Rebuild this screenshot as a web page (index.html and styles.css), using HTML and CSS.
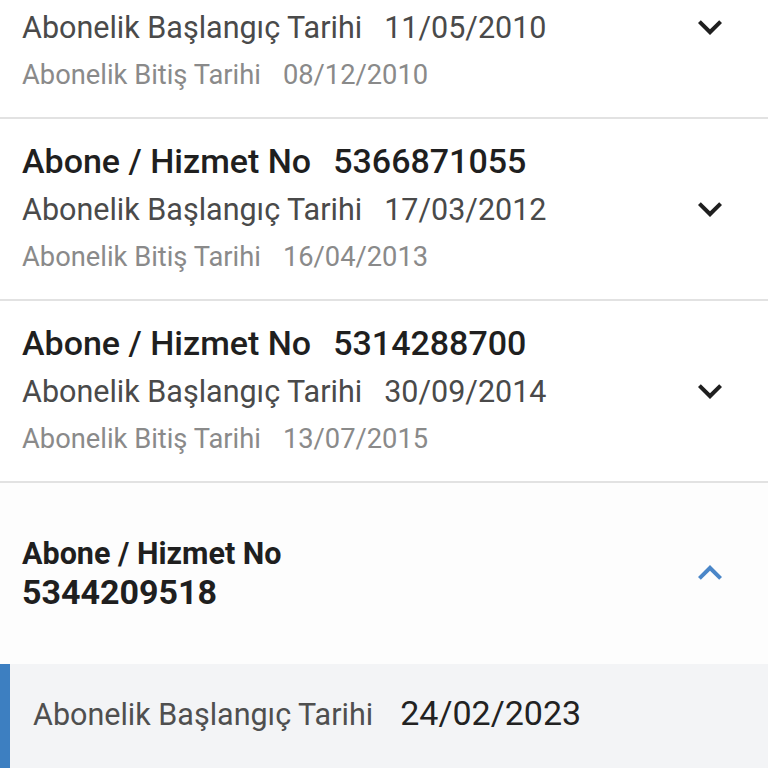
FILE: index.html
```html
<!DOCTYPE html>
<html lang="tr">
<head>
  <meta charset="UTF-8">
  <title>Abonelikler</title>
  <link rel="stylesheet" href="styles.css">
</head>
<body>
  <div class="sub-list">
    <div class="sub-row">
      <div class="sub-info">
        <div class="sub-title"><span>Abone / Hizmet No</span><span class="sub-no">5321604478</span></div>
        <div class="sub-start"><span>Abonelik Başlangıç Tarihi</span><span>11/05/2010</span></div>
        <div class="sub-end"><span>Abonelik Bitiş Tarihi</span><span>08/12/2010</span></div>
      </div>
      <svg class="chevron" viewBox="0 0 24 24"><path d="M16.59 8.59L12 13.17 7.41 8.59 6 10l6 6 6-6z"/></svg>
    </div>

    <div class="sub-row">
      <div class="sub-info">
        <div class="sub-title"><span>Abone / Hizmet No</span><span class="sub-no">5366871055</span></div>
        <div class="sub-start"><span>Abonelik Başlangıç Tarihi</span><span>17/03/2012</span></div>
        <div class="sub-end"><span>Abonelik Bitiş Tarihi</span><span>16/04/2013</span></div>
      </div>
      <svg class="chevron" viewBox="0 0 24 24"><path d="M16.59 8.59L12 13.17 7.41 8.59 6 10l6 6 6-6z"/></svg>
    </div>

    <div class="sub-row">
      <div class="sub-info">
        <div class="sub-title"><span>Abone / Hizmet No</span><span class="sub-no">5314288700</span></div>
        <div class="sub-start"><span>Abonelik Başlangıç Tarihi</span><span>30/09/2014</span></div>
        <div class="sub-end"><span>Abonelik Bitiş Tarihi</span><span>13/07/2015</span></div>
      </div>
      <svg class="chevron" viewBox="0 0 24 24"><path d="M16.59 8.59L12 13.17 7.41 8.59 6 10l6 6 6-6z"/></svg>
    </div>

    <div class="sub-open">
      <div class="open-head">
        <div class="open-info">
          <div class="open-label">Abone / Hizmet No</div>
          <div class="open-no">5344209518</div>
        </div>
        <svg class="chevron up" viewBox="0 0 24 24"><path d="M7.41 15.41L12 10.83l4.59 4.58L18 14l-6-6-6 6z"/></svg>
      </div>
      <div class="open-detail">
        <div class="detail-line"><span class="detail-label">Abonelik Başlangıç Tarihi</span><span class="detail-date">24/02/2023</span></div>
      </div>
    </div>
  </div>
</body>
</html>
```

FILE: styles.css
```css
* { box-sizing: border-box; }
body {
  margin: 0;
  font-family: Roboto, "Noto Sans", sans-serif;
  background: #fff;
  overflow: hidden;
}
.sub-list {
  margin-top: -63px;
}
.sub-row {
  display: flex;
  align-items: center;
  justify-content: space-between;
  padding: 18px 34px 18px 22px;
  border-bottom: 2px solid #e2e2e2;
}
.sub-info > div {
  display: flex;
  height: 48px;
  align-items: center;
  white-space: nowrap;
  gap: 22px;
}
.sub-title {
  font-size: 34px;
  font-weight: 500;
  color: #1f1f1f;
}
.sub-start {
  font-size: 30.5px;
  color: #4a4a4a;
}
.sub-end {
  font-size: 27.3px;
  color: #8a8a8a;
}
.chevron {
  width: 48px;
  height: 48px;
  fill: #1f1f1f;
  flex-shrink: 0;
}
.chevron.up {
  fill: #4a86c8;
}
.open-head {
  display: flex;
  align-items: center;
  justify-content: space-between;
  padding: 52px 34px 53px 22px;
  background: #fdfdfd;
}
.open-label {
  font-size: 30.5px;
  font-weight: 700;
  color: #1f1f1f;
  line-height: 38px;
}
.open-no {
  font-size: 34px;
  font-weight: 700;
  color: #1f1f1f;
  line-height: 38px;
}
.open-detail {
  background: #f3f4f6;
  border-left: 10px solid #3d7fc1;
  padding: 29px 20px 40px 23px;
  height: 200px;
}
.detail-line {
  display: flex;
  align-items: baseline;
  gap: 27px;
  white-space: nowrap;
}
.detail-label {
  font-size: 30.5px;
  color: #4f4f4f;
}
.detail-date {
  font-size: 34px;
  color: #222;
}
```
